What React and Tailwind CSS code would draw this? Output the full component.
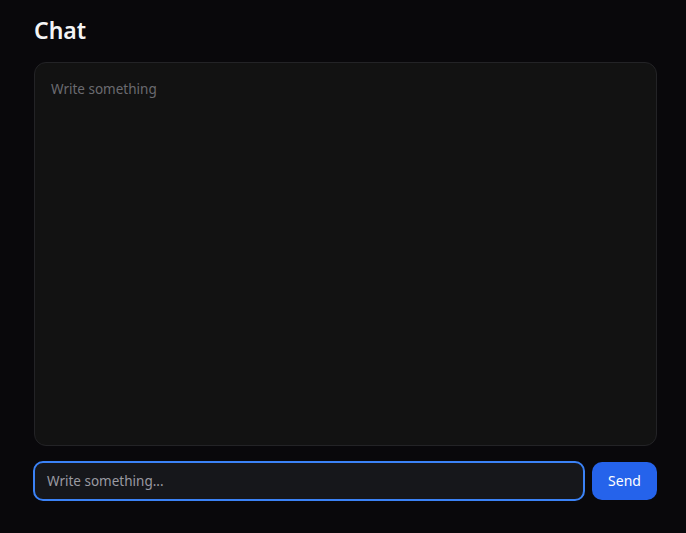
export default function App() {
  return (
    <div className="min-h-[533px] w-full bg-[#09080b] text-white" style={{ fontFamily: '"Noto Sans", "Open Sans", sans-serif' }}>
      <div className="ml-[34px] w-[623px] pt-[14px]">
        <h1 className="text-[23px] font-semibold leading-8 text-[#f4f4f5]">Chat</h1>
        <div className="mt-4 h-[384px] rounded-xl border border-[#232326] bg-[#121212] p-4">
          <p className="text-[13.5px] leading-5 text-[#6b6b70]">Write something</p>
        </div>
        <div className="mt-[15px] flex items-center gap-[7px]">
          <div className="-ml-px flex h-[40px] flex-1 items-center rounded-[10px] border-2 border-[#3b82f6] bg-[#16171b] px-3">
            <span className="text-[13.5px] text-[#9a9aa2]">Write something...</span>
          </div>
          <button className="h-[38px] w-[65px] rounded-[10px] bg-[#2563eb] text-sm font-normal text-white">Send</button>
        </div>
      </div>
    </div>
  );
}
